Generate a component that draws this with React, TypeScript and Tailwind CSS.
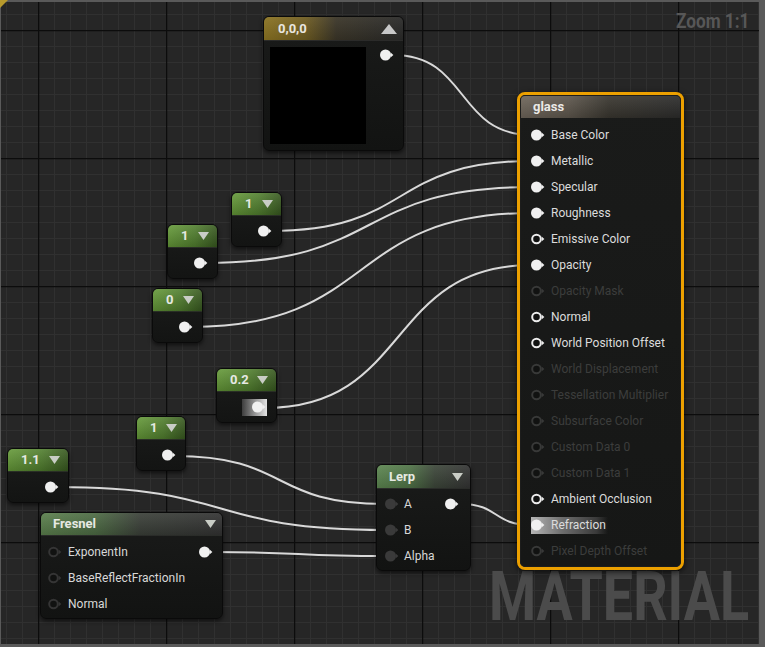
import React from 'react';

type PinKind = 'filled' | 'hollow' | 'dim' | 'dark' | 'darkHollow';

const pinColor: Record<PinKind, string> = {
  filled: '#f0f0f0',
  hollow: '#ececec',
  dim: '#383938',
  dark: '#3a3a3a',
  darkHollow: '#353535',
};

function Pin({ kind = 'filled' }: { kind?: PinKind }) {
  const c = pinColor[kind];
  const solid = kind === 'filled' || kind === 'dark';
  return (
    <svg width="14" height="12" viewBox="0 0 14 12" className="shrink-0">
      {solid ? (
        <circle cx="5.5" cy="6" r="5.5" fill={c} />
      ) : (
        <circle cx="5.5" cy="6" r="4.3" fill="#111211" stroke={c} strokeWidth="2" />
      )}
      <path d="M10.6 3.6 L13.4 6 L10.6 8.4 Z" fill={c} />
    </svg>
  );
}

function DownTri() {
  return (
    <svg width="11" height="8" viewBox="0 0 11 8" className="shrink-0">
      <path d="M0 0 H11 L5.5 8 Z" fill="#c9cdc6" />
    </svg>
  );
}

const font = "font-['Roboto','Liberation_Sans',sans-serif]";
const greenHead =
  'bg-[linear-gradient(180deg,rgba(255,255,255,0.10),rgba(0,0,0,0.18)),linear-gradient(90deg,#659a38,#517f2e_55%,#37581f)]';

function ConstNode({ pos, value, preview }: { pos: string; value: string; preview?: boolean }) {
  return (
    <div
      className={`absolute ${pos} h-[55px] flex flex-col rounded-[6px] border border-[#0a0a0a] bg-[linear-gradient(180deg,#1b1c1b,#131413)] shadow-[0_2px_4px_rgba(0,0,0,0.6)]`}
    >
      <div
        className={`h-[23px] rounded-t-[5px] flex items-center justify-between pl-[13px] pr-[8px] ${greenHead} border-b border-[#2a2f26]`}
      >
        <span className="text-[13px] font-bold text-[#e6e9e3]">{value}</span>
        <DownTri />
      </div>
      <div className="flex-1 flex items-center justify-end pr-[9px]">
        {preview ? (
          <div className="relative flex items-center">
            <div className="w-[25px] h-[17px] bg-[linear-gradient(90deg,#3d3d3d,#9a9a9a_55%,#e4e4e4)]" />
            <div className="absolute left-[10px]">
              <Pin />
            </div>
          </div>
        ) : (
          <Pin />
        )}
      </div>
    </div>
  );
}

type Row = { label: string; kind: PinKind; on?: boolean; hi?: boolean };

const glassRows: Row[] = [
  { label: 'Base Color', kind: 'filled', on: true },
  { label: 'Metallic', kind: 'filled', on: true },
  { label: 'Specular', kind: 'filled', on: true },
  { label: 'Roughness', kind: 'filled', on: true },
  { label: 'Emissive Color', kind: 'hollow', on: true },
  { label: 'Opacity', kind: 'filled', on: true },
  { label: 'Opacity Mask', kind: 'dim' },
  { label: 'Normal', kind: 'hollow', on: true },
  { label: 'World Position Offset', kind: 'hollow', on: true },
  { label: 'World Displacement', kind: 'dim' },
  { label: 'Tessellation Multiplier', kind: 'dim' },
  { label: 'Subsurface Color', kind: 'dim' },
  { label: 'Custom Data 0', kind: 'dim' },
  { label: 'Custom Data 1', kind: 'dim' },
  { label: 'Ambient Occlusion', kind: 'hollow', on: true },
  { label: 'Refraction', kind: 'filled', on: true, hi: true },
  { label: 'Pixel Depth Offset', kind: 'dim' },
];

function wire(x1: number, y1: number, x2: number, y2: number) {
  const t = Math.max((x2 - x1) * 0.55, 40);
  return `M${x1} ${y1} C${x1 + t} ${y1}, ${x2 - t} ${y2}, ${x2} ${y2}`;
}

const wires: [number, number, number, number][] = [
  [393, 55, 532, 135],
  [270, 231, 532, 161],
  [206, 263, 532, 187],
  [190, 327, 532, 213],
  [265, 408, 532, 265],
  [174, 456, 385, 504],
  [57, 487, 385, 530],
  [212, 552, 385, 556],
  [460, 504, 532, 525],
];

export default function App() {
  return (
    <div className={`relative w-[765px] h-[647px] overflow-hidden bg-[#262626] ${font}`}>
      <svg className="absolute inset-0" width="765" height="647">
        <defs>
          <pattern id="minor" x="6" y="14" width="16" height="16" patternUnits="userSpaceOnUse">
            <path d="M0 0.5 H16 M0.5 0 V16" stroke="#303030" strokeWidth="1" fill="none" />
          </pattern>
          <pattern id="major" x="38" y="30" width="128" height="128" patternUnits="userSpaceOnUse">
            <path d="M0 0.5 H128 M0.5 0 V128" stroke="#0c0c0c" strokeWidth="1.5" fill="none" />
          </pattern>
        </defs>
        <rect width="765" height="647" fill="url(#minor)" />
        <rect width="765" height="647" fill="url(#major)" />
      </svg>

      <div className="absolute left-[676px] top-[6px] text-[20px] font-bold text-[#575757] scale-x-[0.86] origin-left">
        Zoom 1:1
      </div>
      <div className="absolute left-[489px] top-[572px] text-[69px] leading-[50px] font-bold text-[#4b4b4b] scale-x-[0.78] origin-left">
        MATERIAL
      </div>

      <svg className="absolute inset-0" width="765" height="647">
        {wires.map((w, i) => (
          <path key={i} d={wire(...w)} stroke="#d9d9d9" strokeWidth="2" fill="none" />
        ))}
      </svg>

      {/* Constant3Vector */}
      <div className="absolute left-[263px] top-[16px] w-[141px] h-[135px] flex flex-col rounded-[6px] border border-[#0a0a0a] bg-[linear-gradient(180deg,#1a1b1a,#121312)] shadow-[0_2px_4px_rgba(0,0,0,0.6)]">
        <div className="h-[24px] rounded-t-[5px] flex items-center justify-between pl-[14px] pr-[6px] bg-[linear-gradient(180deg,rgba(255,255,255,0.06),rgba(0,0,0,0.12)),linear-gradient(90deg,#8c7422,#6e5c22_30%,#3a3528_52%,#2a2a29)] border-b border-[#2b2b2a]">
          <span className="text-[13px] font-bold text-[#e8e6e0]">0,0,0</span>
          <svg width="16" height="10" viewBox="0 0 16 10">
            <path d="M0 10 H16 L8 0 Z" fill="#c8c8c8" />
          </svg>
        </div>
        <div className="flex pl-[6px] pt-[6px]">
          <div className="w-[96px] h-[97px] bg-black" />
          <div className="pl-[14px] pt-[2px]">
            <Pin />
          </div>
        </div>
      </div>

      <ConstNode pos="left-[231px] top-[192px] w-[51px]" value="1" />
      <ConstNode pos="left-[167px] top-[224px] w-[51px]" value="1" />
      <ConstNode pos="left-[152px] top-[288px] w-[51px]" value="0" />
      <ConstNode pos="left-[216px] top-[368px] w-[61px]" value="0.2" preview />
      <ConstNode pos="left-[136px] top-[416px] w-[50px]" value="1" />
      <ConstNode pos="left-[7px] top-[448px] w-[62px]" value="1.1" />

      {/* Fresnel */}
      <div className="absolute left-[40px] top-[512px] w-[183px] h-[107px] flex flex-col rounded-[6px] border border-[#0a0a0a] bg-[linear-gradient(180deg,#1a1b1a,#121312)] shadow-[0_2px_4px_rgba(0,0,0,0.6)]">
        <div className="h-[23px] rounded-t-[5px] flex items-center justify-between pl-[12px] pr-[6px] bg-[linear-gradient(180deg,rgba(255,255,255,0.08),rgba(0,0,0,0.15)),linear-gradient(90deg,#5a7f4c,#4c6a43_30%,#3a3f38_55%,#323232)] border-b border-[#2a2c29]">
          <span className="text-[13px] font-bold text-[#e6e9e3]">Fresnel</span>
          <DownTri />
        </div>
        <div className="pt-[3px]">
          {['ExponentIn', 'BaseReflectFractionIn', 'Normal'].map((l, i) => (
            <div key={l} className="h-[26px] flex items-center pl-[7px] pr-[9px]">
              <Pin kind="darkHollow" />
              <span className="ml-[6px] text-[12px] text-[#d8d8d8]">{l}</span>
              {i === 0 && (
                <div className="ml-auto">
                  <Pin />
                </div>
              )}
            </div>
          ))}
        </div>
      </div>

      {/* Lerp */}
      <div className="absolute left-[376px] top-[464px] w-[95px] h-[107px] flex flex-col rounded-[6px] border border-[#0a0a0a] bg-[linear-gradient(180deg,#1a1b1a,#121312)] shadow-[0_2px_4px_rgba(0,0,0,0.6)]">
        <div className="h-[24px] rounded-t-[5px] flex items-center justify-between pl-[12px] pr-[7px] bg-[linear-gradient(180deg,rgba(255,255,255,0.08),rgba(0,0,0,0.15)),linear-gradient(90deg,#5c8650,#4f7346_35%,#3c4639_62%,#333333)] border-b border-[#2a2c29]">
          <span className="text-[13px] font-bold text-[#e6e9e3]">Lerp</span>
          <DownTri />
        </div>
        <div className="pt-[2px]">
          {['A', 'B', 'Alpha'].map((l, i) => (
            <div key={l} className="h-[26px] flex items-center pl-[8px] pr-[11px]">
              <Pin kind="dark" />
              <span className="ml-[5px] text-[12px] text-[#d8d8d8]">{l}</span>
              {i === 0 && (
                <div className="ml-auto">
                  <Pin />
                </div>
              )}
            </div>
          ))}
        </div>
      </div>

      {/* Material result node */}
      <div className="absolute left-[517px] top-[92px] w-[167px] h-[478px] rounded-[8px] border-[3px] border-[#eca000] bg-[#2a2a28] shadow-[0_2px_6px_rgba(0,0,0,0.7)]">
        <div className="h-full rounded-[5px] border border-[#1d1d1c] bg-[linear-gradient(180deg,#1a1b1a,#161716)]">
          <div className="h-[22px] rounded-t-[4px] flex items-center pl-[12px] bg-[linear-gradient(180deg,rgba(255,255,255,0.08),rgba(0,0,0,0.15)),linear-gradient(90deg,#6e655a,#5d564c_30%,#39362f_55%,#2c2c2b)]">
            <span className="text-[13px] font-bold text-[#ebe9e6]">glass</span>
          </div>
          <div className="pt-[4px]">
            {glassRows.map((r) => (
              <div key={r.label} className="h-[26px] flex items-center pl-[10px]">
                <div
                  className={`flex items-center gap-[6px] pr-[2px] h-[17px] ${
                    r.hi ? 'bg-[linear-gradient(90deg,#b5b5b5,#6e6e6e_40%,#3a3a3a_85%,transparent)]' : ''
                  }`}
                >
                  <Pin kind={r.kind} />
                  <span className={`text-[12px] ${r.on ? 'text-[#dcdcdc]' : 'text-[#3c3d3c]'}`}>{r.label}</span>
                </div>
              </div>
            ))}
          </div>
        </div>
      </div>

      {/* viewport frame */}
      <div className="absolute inset-0 pointer-events-none border-t-2 border-l border-r-[6px] border-b-[3px] border-[#5a5a5a]" />
      <svg className="absolute left-0 top-0" width="9" height="9" viewBox="0 0 9 9">
        <path d="M0 0 H8 L0 8 Z" fill="#b89a2c" />
      </svg>
    </div>
  );
}
